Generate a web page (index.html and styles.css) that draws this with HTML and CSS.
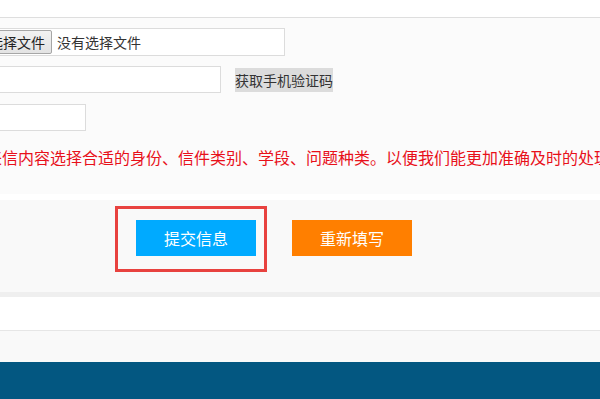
FILE: index.html
```html
<!DOCTYPE html>
<html lang="zh-CN">
<head>
  <meta charset="UTF-8">
  <title>信件提交</title>
  <link rel="stylesheet" href="styles.css">
</head>
<body>
  <div class="top-bar"></div>

  <div class="form-area">
    <div class="form-row">
      <div class="file-box">
        <span class="file-btn">选择文件</span>
        <span class="file-name">没有选择文件</span>
      </div>
    </div>

    <div class="form-row row-phone">
      <input type="text" class="text-input input-phone">
      <span class="code-btn">获取手机验证码</span>
    </div>

    <div class="form-row">
      <input type="text" class="text-input input-code">
    </div>

    <p class="tip">请根据来信内容选择合适的身份、信件类别、学段、问题种类。以便我们能更加准确及时的处理您的来信。</p>
  </div>

  <div class="gap-line"></div>

  <div class="btn-area">
    <div class="mark-box">
      <button type="submit" class="btn btn-submit">提交信息</button>
    </div>
    <button type="reset" class="btn btn-reset">重新填写</button>
  </div>

  <div class="band"></div>
  <div class="blank"></div>
  <div class="pre-footer"></div>
  <div class="footer"></div>
</body>
</html>
```

FILE: styles.css
```css
body {
  margin: 0;
  font-family: "Noto Sans CJK SC", "Liberation Sans", sans-serif;
  background-color: #fff;
  color: #333;
  overflow: hidden;
}
.top-bar {
  height: 17px;
  border-bottom: 1px solid #dedede;
  background-color: #fff;
}
.form-area {
  background-color: #fbfbfb;
  padding: 10px 0 26px 0;
  margin-left: -20px;
}
.form-row {
  display: flex;
  align-items: center;
  margin-bottom: 10px;
}
.row-phone {
  margin-bottom: 11px;
}
.file-box {
  display: flex;
  align-items: center;
  box-sizing: border-box;
  width: 305px;
  height: 28px;
  padding-left: 1px;
  border: 1px solid #dcdcdc;
  background-color: #fff;
  font-size: 14px;
  line-height: 22px;
}
.file-btn {
  box-sizing: border-box;
  height: 24px;
  padding: 0 6px 0 6px;
  border: 1px solid #a6a6a6;
  border-radius: 2px;
  background: linear-gradient(#f2f2f2, #e3e3e3);
  color: #222;
  white-space: nowrap;
}
.file-name {
  margin-left: 5px;
  color: #333;
  white-space: nowrap;
}
.text-input {
  box-sizing: border-box;
  height: 27px;
  border: 1px solid #dcdcdc;
  background-color: #fff;
  padding: 0 6px;
  outline: none;
}
.input-phone {
  width: 241px;
}
.input-code {
  width: 106px;
}
.code-btn {
  margin-left: 14px;
  width: 98px;
  height: 24px;
  background-color: #dcdcdc;
  font-size: 14px;
  line-height: 24px;
  text-align: center;
  color: #333;
  white-space: nowrap;
}
.tip {
  margin: 15px 0 0 -42px;
  font-size: 16px;
  line-height: 22px;
  color: #e8101a;
  white-space: nowrap;
}
.gap-line {
  height: 6px;
  background-color: #fff;
}
.btn-area {
  display: flex;
  align-items: flex-start;
  background-color: #f9f9f9;
  padding: 6px 0 20px 115px;
}
.mark-box {
  border: 3px solid #e8423f;
  padding: 11px 8px 13px 18px;
}
.btn {
  width: 120px;
  height: 36px;
  border: none;
  padding: 0;
  font-family: "Noto Sans CJK SC", sans-serif;
  font-size: 16px;
  color: #fff;
  cursor: pointer;
}
.btn-submit {
  display: block;
  background-color: #00aaff;
}
.btn-reset {
  margin: 14px 0 0 25px;
  background-color: #ff7f00;
}
.band {
  height: 5px;
  background-color: #efefef;
}
.blank {
  height: 33px;
  border-bottom: 1px solid #e6e6e6;
  background-color: #fff;
}
.pre-footer {
  height: 31px;
  background-color: #f9f9f9;
}
.footer {
  height: 40px;
  background-color: #035781;
}
```
